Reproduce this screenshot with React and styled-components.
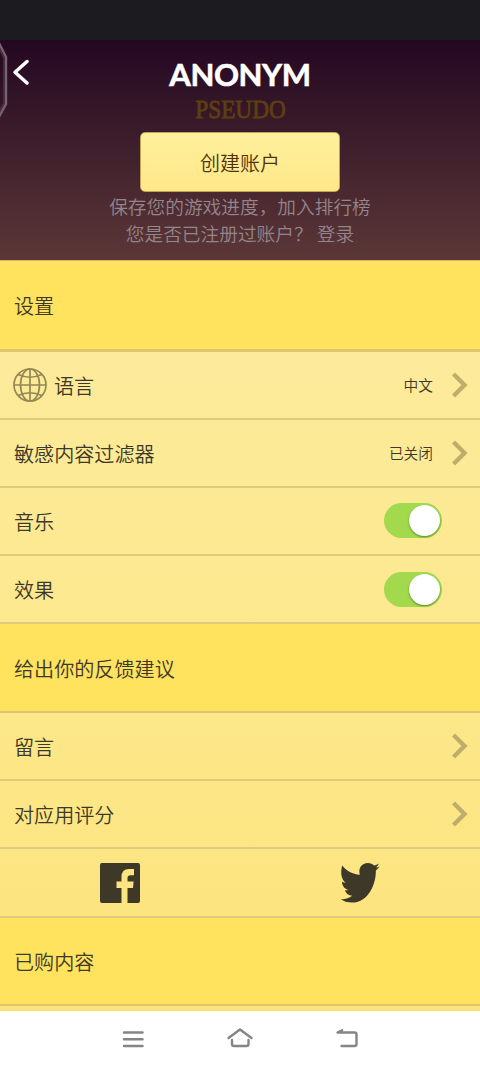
import { useState } from "react";
import styled, { createGlobalStyle } from "styled-components";

const GlobalStyle = createGlobalStyle`
  * {
    box-sizing: border-box;
  }

  body {
    margin: 0;
    background: #fff;
    font-family: "Noto Sans CJK SC", sans-serif;
    font-weight: 350;
    color: #3e3828;
  }
`;

function Chevron() {
  return (
    <svg width="16" height="26" viewBox="0 0 16 26" fill="none">
      <path d="M1.5 2 12.5 13 1.5 24" stroke="#bfae6b" strokeWidth="4.4" />
    </svg>
  );
}

function Globe() {
  return (
    <svg width="34" height="34" viewBox="0 0 34 34" fill="none" stroke="#938851" strokeWidth="1.7">
      <circle cx="17" cy="17" r="16" />
      <ellipse cx="17" cy="17" rx="9.5" ry="16" />
      <path d="M17 1v32M1 17h32M5.2 6.5Q17 12 28.8 6.5M5.2 27.5Q17 22 28.8 27.5" />
    </svg>
  );
}

function LinkRow({ label, value, icon }) {
  return (
    <Row>
      {icon}
      <Label>{label}</Label>
      {value && <Value>{value}</Value>}
      <Chevron />
    </Row>
  );
}

function SwitchRow({ label }) {
  const [on, setOn] = useState(true);
  return (
    <Row>
      <Label>{label}</Label>
      <Toggle type="button" role="switch" aria-checked={on} $on={on} onClick={() => setOn(!on)}>
        <Knob />
      </Toggle>
    </Row>
  );
}

function App() {
  return (
    <>
      <GlobalStyle />
      <Screen>
        <StatusBar />
        <Header>
          <EdgeHandle width="8" height="80" viewBox="0 0 8 80" fill="none">
            <path d="M-1 3 6 17V64L-1 77" stroke="#76636f" strokeWidth="2.4" />
            <path d="M-1 8 4 18V63L-1 72" stroke="#4d3743" strokeWidth="1.4" />
          </EdgeHandle>
          <BackButton type="button">
            <svg width="18" height="26" viewBox="0 0 18 26" fill="none">
              <path d="M15 2.5 3 13.2 15 24" stroke="#fff" strokeWidth="3.5" strokeLinecap="round" strokeLinejoin="round" />
            </svg>
          </BackButton>
          <Name>ANONYM</Name>
          <Pseudo>PSEUDO</Pseudo>
          <CreateButton type="button">创建账户</CreateButton>
          <Hint>保存您的游戏进度，加入排行榜</Hint>
          <Hint>您是否已注册过账户？ 登录</Hint>
        </Header>

        <List>
          <Section $first>设置</Section>
          <LinkRow icon={<Globe />} label="语言" value="中文" />
          <LinkRow label="敏感内容过滤器" value="已关闭" />
          <SwitchRow label="音乐" />
          <SwitchRow label="效果" />
          <Section>给出你的反馈建议</Section>
          <LinkRow label="留言" />
          <LinkRow label="对应用评分" />
          <SocialRow>
            <svg width="40" height="40" viewBox="0 0 40 40" fill="#3e3828">
              <path d="M2 0H38Q40 0 40 2V38Q40 40 38 40H27.5V25H33L33.6 18.5H27.5V15Q27.5 12.2 30.5 12.2H34V6H29Q21.5 6 21.5 14V18.5H16.5V25H21.5V40H2Q0 40 0 38V2Q0 0 2 0Z" />
            </svg>
            <svg width="40" height="42" viewBox="0 0 40 42" fill="#3e3828">
              <path d="M2.2 3.5C6.5 9 12.5 12.2 19.8 12.8C18 6 22 1 27.8 1C30.5 1 32.5 2 34.2 3.6C35.8 3.3 37.5 2.5 38.8 1.6C38.3 3.4 37.2 4.6 35.8 5.6C37.2 5.4 38.5 5 39.7 4.5C38.7 6 37.4 7.3 35.8 8.4C36.2 21 29 40.5 12 40.5C7.5 40.5 3.5 39.2 .8 37.2C5 37.5 9 36.3 12.2 33.8C8.6 33.5 5.9 31.4 4.9 28.2C6.1 28.4 7.3 28.3 8.4 28C4.6 27 2 23.7 2 19.8C3.2 20.5 4.5 20.8 5.7 20.8C1.7 18 0 11 2.2 3.5Z" />
            </svg>
          </SocialRow>
          <Section>已购内容</Section>
        </List>

        <NavBar>
          <svg width="24" height="24" viewBox="0 0 24 24" fill="none" stroke="#858585" strokeWidth="2.5" strokeLinecap="round">
            <path d="M3 5.5h18.5M3 12.3h18.5M3 19h18.5" />
          </svg>
          <svg width="28" height="24" viewBox="0 0 28 24" fill="none" stroke="#858585" strokeWidth="2.4" strokeLinecap="round" strokeLinejoin="round">
            <path d="M2.5 11 14 2.5 25.5 11M6 13V17Q6 19 8 19H20.5Q22.5 19 22.5 17V13" />
          </svg>
          <svg width="24" height="24" viewBox="0 0 24 24" fill="none" stroke="#858585" strokeWidth="2.4" strokeLinecap="round" strokeLinejoin="round">
            <path d="M7 3.2 2.5 5.5H19.5Q21.5 5.5 21.5 7.5V17Q21.5 19 19.5 19H6.5" />
          </svg>
        </NavBar>
      </Screen>
    </>
  );
}

export default App;

const Screen = styled.div`
  display: flex;
  flex-direction: column;
  width: 480px;
  height: 1067px;
  overflow: hidden;
`;

const StatusBar = styled.div`
  flex: none;
  height: 40px;
  background: #1c1c20;
`;

const Header = styled.header`
  position: relative;
  flex: none;
  display: flex;
  flex-direction: column;
  align-items: center;
  height: 220px;
  padding-top: 15px;
  background: linear-gradient(#240822, #5b3737);
`;

const EdgeHandle = styled.svg`
  position: absolute;
  left: 0;
  top: 0;
`;

const BackButton = styled.button`
  position: absolute;
  left: 12px;
  top: 19px;
  display: flex;
  padding: 0;
  border: none;
  background: none;
  cursor: pointer;
`;

const Name = styled.h1`
  margin: 0;
  font: bold 31px/38px Lato, sans-serif;
  letter-spacing: -0.4px;
  color: #fff;
  -webkit-text-stroke: 0.6px #fff;
`;

const Pseudo = styled.div`
  height: 39px;
  padding: 1px 0 0 1px;
  font: 26px/31px "Liberation Serif", serif;
  color: #5e3f0f;
  -webkit-text-stroke: 0.8px #5e3f0f;
  transform: scaleX(0.895);
`;

const CreateButton = styled.button`
  flex: none;
  width: 200px;
  height: 60px;
  padding: 1px 0 0;
  border: 1px solid #c1a351;
  border-radius: 5px;
  background: linear-gradient(#fff09d, #ffe888);
  font: 350 20px "Noto Sans CJK SC", sans-serif;
  color: #4f3209;
  cursor: pointer;
`;

const Hint = styled.p`
  margin: 0;
  font-size: 18.7px;
  line-height: 27.5px;
  white-space: pre;
  color: #94858c;

  ${CreateButton} + & {
    margin-top: -0.5px;
  }
`;

const List = styled.main`
  flex: none;
  height: 751px;
  background: linear-gradient(#fdeca0, #fce47b);
`;

const Section = styled.h2`
  display: flex;
  align-items: center;
  height: ${({ $first }) => ($first ? 91.5 : 88.8)}px;
  margin: 0;
  padding: 1px 14px 0;
  border-top: ${({ $first }) => ($first ? "1px solid #d2b862" : "none")};
  border-bottom: ${({ $first }) => ($first ? 3 : 2)}px solid #dcc56c;
  background: #ffe25e;
  font-size: 20.1px;
  font-weight: 350;
`;

const Row = styled.div`
  display: flex;
  align-items: center;
  height: 68.2px;
  padding: 0 12px 0 13px;
  border-bottom: 2px solid #dfcb7c;
`;

const Label = styled.span`
  flex: 1;
  padding: 1px 0 0 1px;
  font-size: 20.1px;

  svg + & {
    margin-left: 6px;
  }
`;

const Value = styled.span`
  margin-right: 19px;
  font-size: 14.7px;
`;

const Toggle = styled.button`
  display: flex;
  justify-content: ${({ $on }) => ($on ? "flex-end" : "flex-start")};
  align-items: center;
  width: 58px;
  height: 35px;
  margin-right: 26px;
  padding: 0 2px;
  border: none;
  border-radius: 18px;
  background: ${({ $on }) => ($on ? "#a2d94d" : "#c9bd83")};
  cursor: pointer;
`;

const Knob = styled.span`
  width: 31px;
  height: 31px;
  border-radius: 50%;
  background: #fff;
  box-shadow: 0 1px 2px rgba(40, 80, 0, 0.6);
`;

const SocialRow = styled(Row)`
  justify-content: space-around;
  padding: 0;
`;

const NavBar = styled.nav`
  flex: 1;
  display: flex;
  justify-content: center;
  gap: 81px;
  padding-top: 16px;
  background: #fff;
`;
